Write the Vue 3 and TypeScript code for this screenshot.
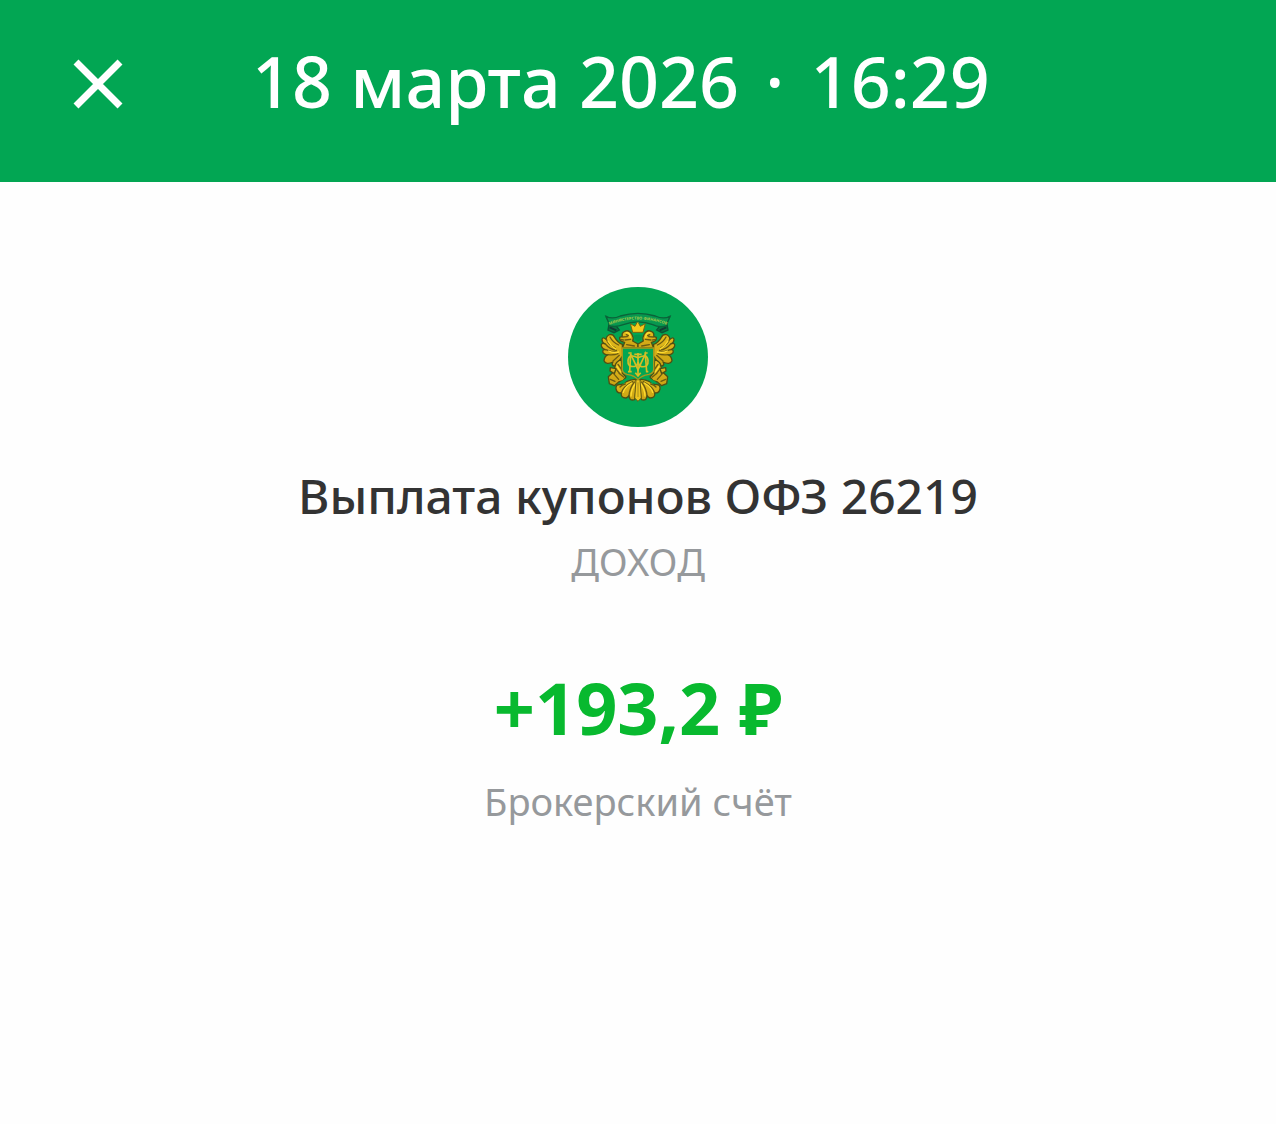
<script setup lang="ts">
interface Operation {
  day: string
  time: string
  title: string
  kind: string
  amount: string
  account: string
}

const operation: Operation = {
  day: '18 марта 2026',
  time: '16:29',
  title: 'Выплата купонов ОФЗ 26219',
  kind: 'ДОХОД',
  amount: '+193,2 ₽',
  account: 'Брокерский счёт',
}
</script>

<template>
  <div class="screen">
    <header class="bar">
      <button class="close" type="button" aria-label="Закрыть">
        <svg viewBox="0 0 50 50" width="50" height="50" aria-hidden="true">
          <path d="M3 3L47 47M47 3L3 47" fill="none" stroke="currentColor" stroke-width="7" />
        </svg>
      </button>
      <h1 class="date">{{ operation.day }} <span class="dot">·</span> {{ operation.time }}</h1>
    </header>

    <main class="details">
      <svg class="emblem" viewBox="24 21 420 420" aria-hidden="true">
        <defs>
          <linearGradient id="gold" x1="0" y1="0" x2="0" y2="1">
            <stop offset="0" stop-color="#e6bd1c" />
            <stop offset="1" stop-color="#c9a214" />
          </linearGradient>
          <path id="ribbonLine" d="M150 134Q234 103 318 134" />
          <g id="half">
            <!-- ribbon tail -->
            <path d="M138 109L148 128L144 150L162 158L178 150L166 134Z" fill="#07763f" stroke="#0b5535" stroke-width="4" />
            <path d="M149 142L169 151" stroke="#123a34" stroke-width="6" />
            <g fill="url(#gold)" stroke="#4d4f14" stroke-width="4" stroke-linejoin="round">
              <!-- wing -->
              <path d="M187 193Q173 188 164 172Q158 160 146 165Q139 169 138 178Q127 169 126 179Q126 188 136 192Q123 187 124 197Q126 207 137 209Q126 207 129 218Q134 226 145 224Q134 227 132 242Q138 256 159 246Q153 255 162 258Q173 258 180 239L188 228Z" />
              <!-- neck and head -->
              <path d="M188 202L194 187Q176 184 179 172L187 170Q184 158 194 154Q207 148 215 162Q222 173 218 183L234 192V204Z" />
              <!-- leg -->
              <path d="M184 239Q166 245 165 260L161 275L145 290L148 311L163 317L176 306L189 302L198 291L187 279Z" />
              <path d="M168 266L151 263L150 273L163 281Z" />
              <!-- tail feathers -->
              <path d="M224 298Q198 302 184 314Q166 311 168 327Q172 342 184 338Q181 354 198 354Q204 352 207 346Q207 364 224 359L232 302Z" />
            </g>
            <g fill="none" stroke="#6b5b12" stroke-width="4" stroke-linecap="round">
              <path d="M139 178Q145 195 165 203M136 192Q148 207 169 211M137 209Q153 216 171 216M145 224Q162 226 174 221M159 243L178 226M150 171Q158 187 176 195" />
              <path d="M188 171L202 170M195 180L212 178M199 164L205 167M200 194L223 198M181 178L190 180" />
              <path d="M174 253L186 270M169 268L181 283M161 281L176 298M151 298L165 304M177 280L191 291" />
              <path d="M184 338Q189 321 218 305M207 346Q209 325 223 306M180 321Q186 314 196 312" />
            </g>
            <path d="M144 183Q152 198 167 207M146 213Q160 220 176 216M199 158Q210 158 211 172M171 259L182 276M190 337Q194 321 215 309M213 348Q214 328 226 311" fill="none" stroke="#ffdc30" stroke-width="4" stroke-linecap="round" />
            <path d="M196 299L180 309M204 293L188 311" fill="none" stroke="#03a653" stroke-width="5" />
          </g>
        </defs>

        <circle cx="234" cy="231" r="210" fill="#03a653" />
        <use href="#half" />
        <use href="#half" transform="matrix(-1 0 0 1 468 0)" />

        <path d="M228 299L224 354L234 364L244 354L240 299Z" fill="#edc520" stroke="#665b12" stroke-width="3" />
        <path d="M234 307V351" stroke="#8a7413" stroke-width="2" />
        <path d="M218 157L211 131L225 139L233 124L241 139L256 131L249 157Z" fill="#f3c91c" stroke="#776411" stroke-width="3" />
        <circle cx="233" cy="126" r="4" fill="#f3c91c" />
        <path d="M222 166Q234 162 246 166Q248 180 234 184Q221 179 222 166Z" fill="#04964b" />

        <path d="M138 109Q157 119 181 108Q234 92 286 108Q310 119 330 109L318 138Q296 143 278 134Q234 117 190 134Q171 142 150 138Z" fill="#08984f" stroke="#0b6239" stroke-width="4" />
        <text class="ribbon" fill="#a9c94a" text-anchor="middle">
          <textPath href="#ribbonLine" startOffset="50%">МИНИСТЕРСТВО ФИНАНСОВ</textPath>
        </text>

        <path d="M187 204H281V269Q280 280 267 283Q243 287 234 299Q225 287 201 283Q188 280 187 269Z" fill="#03a653" stroke="#a8981d" stroke-width="4" />
        <!-- interlaced monogram -->
        <g fill="none" stroke="#d7bd25" stroke-width="5">
          <path d="M204 275H215M209 275L212 222L234 269L256 222L260 275H265M205 219H215M253 219H263" />
          <path d="M234 219V286M223 223H245M226 278L234 288L242 278" />
          <path d="M234 233Q207 220 204 241Q202 263 225 259Q233 255 234 246Q236 257 244 260Q266 263 264 241Q261 220 234 233Z" />
        </g>
      </svg>

      <h2 class="title">{{ operation.title }}</h2>
      <p class="note">{{ operation.kind }}</p>
      <p class="amount">{{ operation.amount }}</p>
      <p class="note">{{ operation.account }}</p>
    </main>
  </div>
</template>

<style>
body {
  margin: 0;
  background: #fefefe;
}
</style>

<style scoped>
.screen {
  min-height: 100vh;
  font-family: "Noto Sans", "Open Sans", sans-serif;
  color: #333;
}

.bar {
  display: flex;
  align-items: flex-start;
  gap: 104px;
  padding: 34px 48px 48px;
  background: #02a653;
  color: #fff;
}

.close {
  display: flex;
  flex: none;
  align-items: center;
  justify-content: center;
  width: 100px;
  height: 100px;
  padding: 0;
  border: 0;
  background: none;
  color: inherit;
  cursor: pointer;
}

.date {
  margin: 0;
  font-size: 70px;
  font-weight: 500;
  line-height: 94px;
  white-space: nowrap;
}

.dot {
  margin: 0 8px;
}

.details {
  display: flex;
  flex-direction: column;
  align-items: center;
  padding: 105px 24px 48px;
  text-align: center;
}

.emblem {
  width: 140px;
  height: 140px;
}

.ribbon {
  font-size: 12px;
  font-weight: 700;
}

.title {
  margin: 34px 0 0;
  font-size: 48px;
  font-weight: 500;
  line-height: 70px;
}

.note {
  margin: 0;
  font-size: 38px;
  line-height: 60px;
  color: #96999c;
}

.amount {
  margin: 68px 0 16px;
  font-size: 72px;
  font-weight: 700;
  line-height: 96px;
  color: #08b92f;
}
</style>
